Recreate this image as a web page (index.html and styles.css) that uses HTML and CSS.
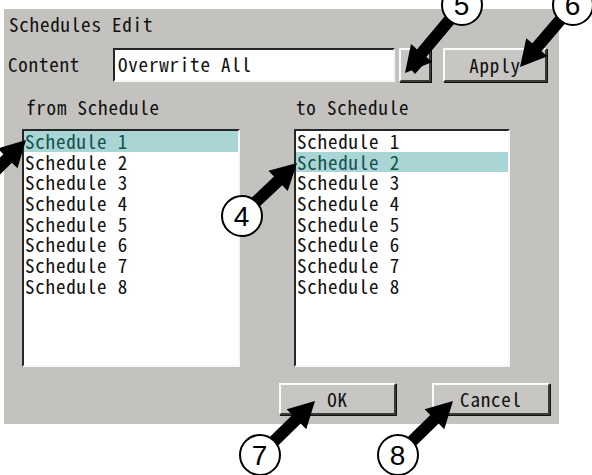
FILE: index.html
```html
<!DOCTYPE html>
<html lang="en">
  <head>
    <meta charset="UTF-8" />
    <title>Schedules Edit</title>
    <link rel="stylesheet" href="styles.css">
  </head>
  <body>
    <div class="dialog">
      <div class="title">Schedules Edit</div>
      <div class="content-row">
        <span class="label">Content</span>
        <div class="combo sunken">Overwrite All</div>
        <div class="btn drop"><span class="tri"></span></div>
        <div class="btn apply">Apply</div>
      </div>
      <div class="lists">
        <div class="col col-from">
          <div class="col-title">from Schedule</div>
          <ul class="listbox sunken">
            <li class="sel">Schedule 1</li>
            <li>Schedule 2</li>
            <li>Schedule 3</li>
            <li>Schedule 4</li>
            <li>Schedule 5</li>
            <li>Schedule 6</li>
            <li>Schedule 7</li>
            <li>Schedule 8</li>
          </ul>
        </div>
        <div class="col col-to">
          <div class="col-title">to Schedule</div>
          <ul class="listbox sunken">
            <li>Schedule 1</li>
            <li class="sel">Schedule 2</li>
            <li>Schedule 3</li>
            <li>Schedule 4</li>
            <li>Schedule 5</li>
            <li>Schedule 6</li>
            <li>Schedule 7</li>
            <li>Schedule 8</li>
          </ul>
        </div>
      </div>
      <div class="actions">
        <div class="btn ok">OK</div>
        <div class="btn cancel">Cancel</div>
      </div>
    </div>

    <!-- callout arrows over the dialog -->
    <svg class="notes" width="592" height="475" viewBox="0 0 592 475">
      <g class="arrow" transform="translate(26 140) rotate(-45)">
        <polygon points="0,0 -26,-14 -26,-6 -80,-6 -80,6 -26,6 -26,14" />
      </g>
      <g class="arrow" transform="translate(297 163) rotate(-43.4)">
        <polygon points="0,0 -26,-14 -26,-6 -60,-6 -60,6 -26,6 -26,14" />
      </g>
      <g class="arrow" transform="translate(405 73) rotate(130)">
        <polygon points="0,0 -26,-14 -26,-6 -72,-6 -72,6 -26,6 -26,14" />
      </g>
      <g class="arrow" transform="translate(520 67) rotate(130.5)">
        <polygon points="0,0 -26,-14 -26,-6 -65,-6 -65,6 -26,6 -26,14" />
      </g>
      <g class="arrow" transform="translate(315 401) rotate(-44.5)">
        <polygon points="0,0 -26,-14 -26,-6 -60,-6 -60,6 -26,6 -26,14" />
      </g>
      <g class="arrow" transform="translate(453 401) rotate(-44.5)">
        <polygon points="0,0 -26,-14 -26,-6 -60,-6 -60,6 -26,6 -26,14" />
      </g>

      <circle class="bubble" cx="242" cy="216" r="20" />
      <text class="num" x="242" y="226">4</text>
      <circle class="bubble" cx="462" cy="5" r="20" />
      <text class="num" x="462" y="15">5</text>
      <circle class="bubble" cx="573" cy="5" r="20" />
      <text class="num" x="573" y="15">6</text>
      <circle class="bubble" cx="260" cy="455" r="20" />
      <text class="num" x="260" y="465">7</text>
      <circle class="bubble" cx="398" cy="455" r="20" />
      <text class="num" x="398" y="465">8</text>
    </svg>
  </body>
</html>
```

FILE: styles.css
```css
body {
  margin: 0;
  background: #fff;
  color: #111;
  font: 19px "Noto Sans CJK JP", "Liberation Mono", monospace;
  font-feature-settings: "hwid" 1;
  letter-spacing: 0.8px;
}
.dialog {
  width: 555px;
  height: 415px;
  margin: 9px 0 0 4px;
  padding: 3px 4px 0 4px;
  box-sizing: border-box;
  background: #c4c2bf;
}
.title {
  line-height: 24px;
  padding-left: 1px;
}
.content-row {
  display: flex;
  align-items: center;
  margin-top: 12px;
  height: 34px;
}
.label {
  width: 105px;
  line-height: 24px;
  padding-bottom: 2px;
}
.sunken {
  border: 2px solid;
  border-color: #262626 #f6f6f6 #f6f6f6 #262626;
  background: #fff;
  box-sizing: border-box;
}
.combo {
  width: 282px;
  height: 34px;
  padding-left: 3px;
  line-height: 28px;
}
.btn {
  display: flex;
  align-items: center;
  justify-content: center;
  box-sizing: border-box;
  padding-bottom: 2px;
  background: #c8c6c3;
  border: 2px solid;
  border-color: #fbfbfb #3a3a3a #3a3a3a #fbfbfb;
  box-shadow: 1px 1px 0 #111;
}
.drop {
  width: 32px;
  height: 34px;
  margin-left: 4px;
}
.tri {
  margin-top: 10px;
  border-left: 8px solid transparent;
  border-right: 8px solid transparent;
  border-top: 9px solid #000;
}
.apply {
  width: 104px;
  height: 34px;
  margin-left: 12px;
}
.lists {
  display: grid;
  grid-template-columns: 218px 216px;
  column-gap: 54px;
  margin: 13px 0 0 14px;
}
.col-title {
  line-height: 24px;
  padding-left: 4px;
}
.col-to .col-title {
  padding-left: 2px;
}
.listbox {
  list-style: none;
  margin: 10px 0 0;
  padding: 0;
  height: 238px;
}
.listbox li {
  line-height: 20.7px;
  height: 20.7px;
  padding-left: 1px;
}
.listbox .sel {
  background: #a9d6d5;
  color: #13524e;
}
.actions {
  display: flex;
  justify-content: flex-end;
  gap: 36px;
  margin-top: 16px;
  padding-right: 5px;
}
.ok {
  width: 117px;
  height: 32px;
}
.cancel {
  width: 118px;
  height: 32px;
}
.notes {
  position: absolute;
  top: 0;
  left: 0;
  pointer-events: none;
}
.arrow polygon {
  fill: #000;
}
.bubble {
  fill: #fff;
  stroke: #000;
  stroke-width: 2;
}
.num {
  font: 28px "Liberation Sans", Arial, sans-serif;
  text-anchor: middle;
  fill: #000;
}
```
